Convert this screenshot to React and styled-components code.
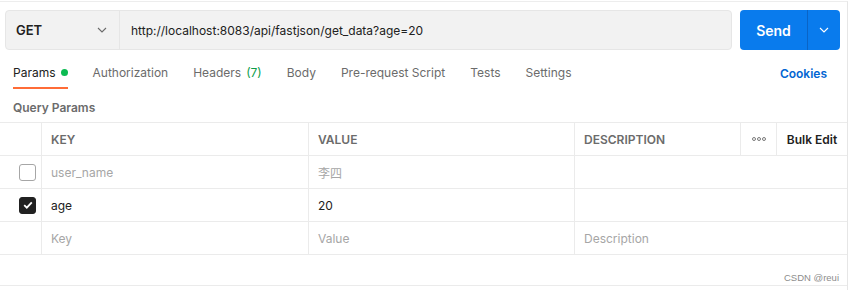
import React from 'react'
import styled, { createGlobalStyle } from 'styled-components'

const Global = createGlobalStyle`
  body {
    margin: 0;
    background: #fff;
    font-family: Inter, "Noto Sans", "Noto Sans CJK SC", sans-serif;
    color: #212121;
  }
`;

const Frame = styled.div`
  width: 848px;
  height: 289px;
  margin-top: 1px;
  border-top: 1px solid #ededed;
  border-right: 1px solid #e6e6e6;
  box-sizing: border-box;
  display: flex;
  flex-direction: column;
`;

const Bar = styled.div`
  display: flex;
  gap: 8px;
  padding: 8px 7px 0 5px;
  height: 40px;
`;

const UrlGroup = styled.div`
  flex: 1;
  display: flex;
  background: #f2f2f2;
  border: 1px solid #e6e6e6;
  border-radius: 4px;
`;

const Method = styled.div`
  width: 114px;
  box-sizing: border-box;
  display: flex;
  align-items: center;
  justify-content: space-between;
  padding: 0 12px 0 10px;
  border-right: 1px solid #e6e6e6;
  font-size: 13px;
  font-weight: 600;
`;

const Url = styled.div`
  flex: 1;
  display: flex;
  align-items: center;
  padding-left: 11px;
  font-size: 12px;
`;

const Send = styled.div`
  width: 100px;
  display: flex;
  background: #097bed;
  border-radius: 4px;
  color: #fff;
  font-size: 14px;
  font-weight: 600;
`;

const SendMain = styled.div`
  width: 67px;
  display: flex;
  align-items: center;
  justify-content: center;
  border-right: 1px solid #0a64c6;
`;

const SendMore = styled.div`
  flex: 1;
  display: flex;
  align-items: center;
  justify-content: center;
`;

const Tabs = styled.div`
  display: flex;
  align-items: stretch;
  padding: 0 20px 0 13px;
  margin-top: 8px;
  height: 31px;
`;

const Tab = styled.div`
  display: flex;
  align-items: center;
  gap: 5px;
  margin-right: 25px;
  font-size: 12px;
  color: ${p => (p.active ? '#212121' : '#6b6b6b')};
  border-bottom: 2px solid ${p => (p.active ? '#ff6c37' : 'transparent')};
`;

const Dot = styled.span`
  width: 7px;
  height: 7px;
  border-radius: 50%;
  background: #0cbb52;
`;

const Count = styled.span`
  color: #0b9d4a;
`;

const Cookies = styled.div`
  margin-left: auto;
  display: flex;
  align-items: center;
  font-size: 12px;
  font-weight: 600;
  color: #0265d2;
`;

const Section = styled.div`
  padding: 11px 13px 0;
  height: 22px;
  font-size: 12px;
  font-weight: 600;
  color: #6b6b6b;
`;

const Row = styled.div`
  display: grid;
  grid-template-columns: 41px 267px 266px 166px 36px 1fr;
  height: 32px;
  border-top: 1px solid #ebebeb;
`;

const Cell = styled.div`
  display: flex;
  align-items: center;
  padding-left: ${p => (p.check ? '19px' : '9px')};
  border-left: ${p => (p.first ? 'none' : '1px solid #ebebeb')};
  grid-column: ${p => p.span || 'auto'};
  font-size: 12px;
  font-weight: ${p => (p.head ? 600 : 400)};
  color: ${p => p.color || '#212121'};
  justify-content: ${p => (p.center ? 'center' : 'flex-start')};
  ${p => p.center && 'padding-left: 0;'}
`;

const Box = styled.div`
  width: 15px;
  height: 15px;
  border-radius: 3px;
  border: 1px solid ${p => (p.checked ? '#212121' : '#a6a6a6')};
  background: ${p => (p.checked ? '#212121' : '#fff')};
  display: flex;
  align-items: center;
  justify-content: center;
`;

const Footer = styled.div`
  height: 28px;
  border-top: 1px solid #ebebeb;
  border-bottom: 1px solid #ebebeb;
  display: flex;
  justify-content: flex-end;
  align-items: flex-end;
  padding: 0 8px 2px 0;
  font-size: 9.5px;
  color: #8c8c8c;
  font-family: "Liberation Sans", Arial, sans-serif;
`;

const Chevron = ({ color }) => (
  <svg width="10" height="6" viewBox="0 0 10 6" fill="none">
    <path d="M1 1l4 4 4-4" stroke={color} strokeWidth="1.1" />
  </svg>
);

const Dots = () => (
  <svg width="14" height="4" viewBox="0 0 14 4" fill="none">
    <circle cx="2" cy="2" r="1.5" stroke="#6b6b6b" strokeWidth="0.9" />
    <circle cx="7" cy="2" r="1.5" stroke="#6b6b6b" strokeWidth="0.9" />
    <circle cx="12" cy="2" r="1.5" stroke="#6b6b6b" strokeWidth="0.9" />
  </svg>
);

const params = [
  { key: 'user_name', value: '李四', on: false },
  { key: 'age', value: '20', on: true },
];

const App = () => {
  return (
    <>
      <Global />
      <Frame>
        <Bar>
          <UrlGroup>
            <Method>
              GET
              <Chevron color="#6b6b6b" />
            </Method>
            <Url>http://localhost:8083/api/fastjson/get_data?age=20</Url>
          </UrlGroup>
          <Send>
            <SendMain>Send</SendMain>
            <SendMore>
              <Chevron color="#fff" />
            </SendMore>
          </Send>
        </Bar>
        <Tabs>
          <Tab active>
            Params <Dot />
          </Tab>
          <Tab>Authorization</Tab>
          <Tab>
            Headers <Count>(7)</Count>
          </Tab>
          <Tab>Body</Tab>
          <Tab>Pre-request Script</Tab>
          <Tab>Tests</Tab>
          <Tab>Settings</Tab>
          <Cookies>Cookies</Cookies>
        </Tabs>
        <Section>Query Params</Section>
        <Row>
          <Cell first />
          <Cell head color="#6b6b6b">KEY</Cell>
          <Cell head color="#6b6b6b">VALUE</Cell>
          <Cell head color="#6b6b6b">DESCRIPTION</Cell>
          <Cell center>
            <Dots />
          </Cell>
          <Cell head center>Bulk Edit</Cell>
        </Row>
        {params.map(p => (
          <Row key={p.key}>
            <Cell first check>
              <Box checked={p.on}>
                {p.on && (
                  <svg width="10" height="8" viewBox="0 0 10 8" fill="none">
                    <path d="M1.2 4.2l2.6 2.5L8.8 1.3" stroke="#fff" strokeWidth="1.8" />
                  </svg>
                )}
              </Box>
            </Cell>
            <Cell color={p.on ? '#212121' : '#a6a6a6'}>{p.key}</Cell>
            <Cell color={p.on ? '#212121' : '#a6a6a6'}>{p.value}</Cell>
            <Cell span="4 / 7" />
          </Row>
        ))}
        <Row>
          <Cell first />
          <Cell color="#a6a6a6">Key</Cell>
          <Cell color="#a6a6a6">Value</Cell>
          <Cell span="4 / 7" color="#a6a6a6">Description</Cell>
        </Row>
        <Footer>CSDN @reui</Footer>
      </Frame>
    </>
  )
}

export default App
